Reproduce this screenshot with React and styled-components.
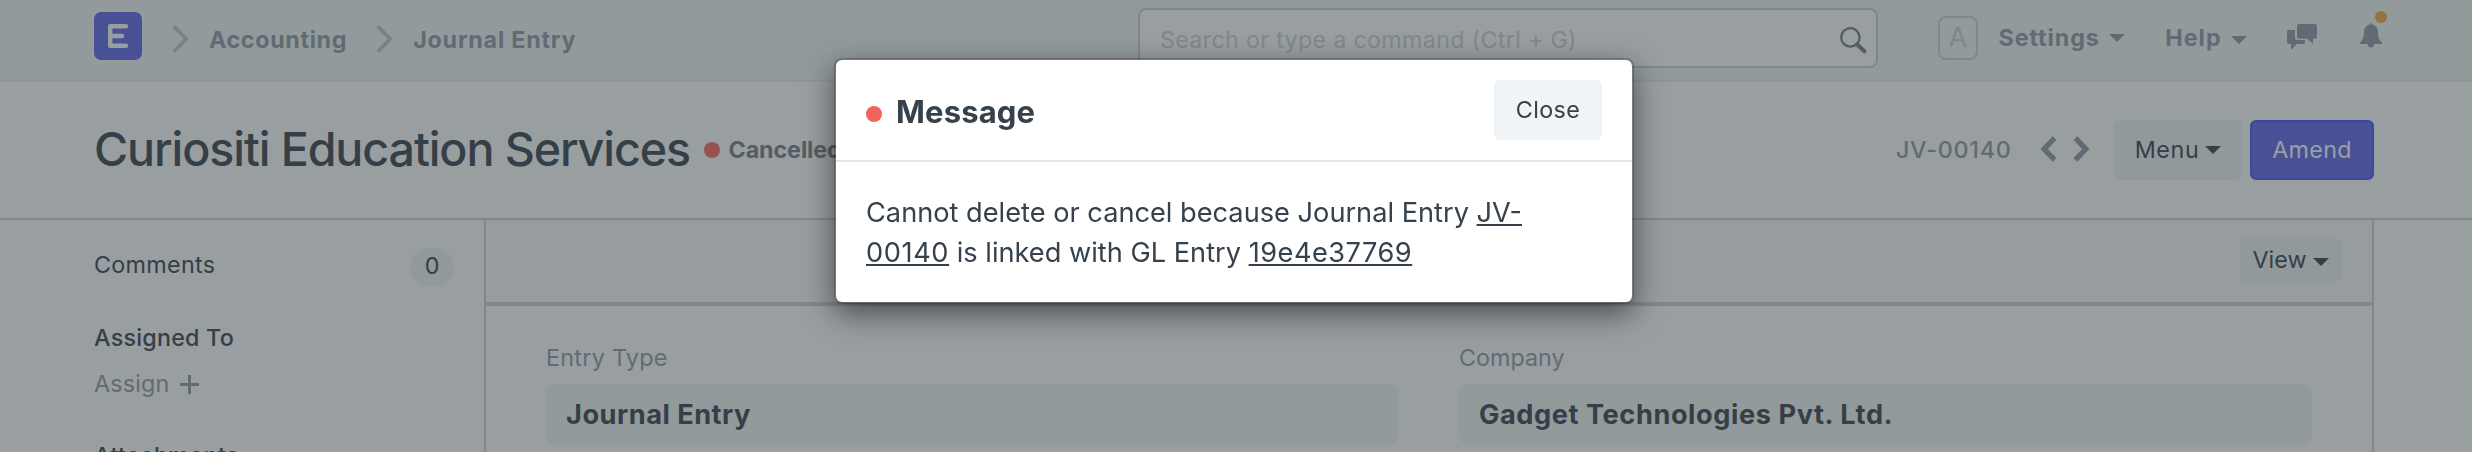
import React from 'react';
import styled, { createGlobalStyle } from 'styled-components';

const muted = 'rgb(141, 153, 164)';
const dark = 'rgb(54, 65, 76)';
const line = 'rgb(207, 211, 214)';
const soft = 'rgb(238, 245, 245)';

const GlobalStyle = createGlobalStyle`
  * { box-sizing: border-box; }
  body { margin: 0; background: #fff; overflow: hidden; }
  button { border: 0; margin: 0; font: inherit; color: inherit; }
  svg { display: block; flex: none; }
`;

const Page = styled.div`
  height: 452px;
  overflow: hidden;
  font-family: Inter, "Liberation Sans", sans-serif;
  font-size: 23.3px;
  line-height: 34px;
  color: ${dark};
  white-space: nowrap;
`;

const Text = styled.span`
  letter-spacing: ${(p) => p.$spacing || 0}px;
  font-weight: ${(p) => p.$weight || 400};
`;

/* Navbar */
const Navbar = styled.header`
  display: flex;
  align-items: flex-start;
  height: 82px;
  padding-left: 94px;
  background: rgb(240, 247, 246);
  border-bottom: 2px solid rgb(234, 237, 241);
  color: ${muted};
`;

const Breadcrumbs = styled.nav`
  display: flex;
  flex: 0 0 1044px;
  padding-top: 12px;
`;

const Logo = styled.div`
  width: 48px;
  height: 48px;
  border-radius: 7px;
  background: rgb(94, 101, 235);
`;

const Separator = styled.div`
  margin: 12px 19px 0 30px;
`;

const Crumb = styled(Text)`
  margin-top: 10.5px;
  margin-right: -1px;
  font-weight: 700;
`;

const SearchBox = styled.div`
  display: flex;
  justify-content: space-between;
  flex: 0 0 740px;
  height: 60px;
  margin-top: 8px;
  padding: 13px 9px 0 20px;
  border: 2px solid ${line};
  border-radius: 8px;
  background: #fff;
  color: rgb(207, 210, 211);
`;

const SearchIconWrap = styled.div`
  margin-top: 4px;
`;

const NavTools = styled.div`
  display: flex;
  padding-left: 60px;
`;

const Avatar = styled.div`
  width: 40px;
  height: 44px;
  margin: 16px 20.5px 0 0;
  border: 2px solid ${line};
  border-radius: 8px;
  font-size: 27.2px;
  line-height: 40px;
  text-align: center;
  color: rgb(205, 208, 210);
`;

const NavMenu = styled.div`
  display: flex;
  gap: 9.5px;
  margin: 20.5px 40px 0 0;
`;

const Caret = styled.span`
  flex: none;
  width: 0;
  height: 0;
  margin-top: ${(p) => p.$top || 0}px;
  border: 8px solid transparent;
  border-top-color: currentColor;
  border-bottom: 0;
`;

const CommentsWrap = styled.div`
  margin: 24px 43px 0 0;
`;

const BellWrap = styled.div`
  position: relative;
  margin-top: 23px;
`;

const BellBadge = styled.span`
  position: absolute;
  left: 15px;
  top: -12px;
  width: 12px;
  height: 12px;
  border-radius: 50%;
  background: rgb(248, 169, 59);
`;

/* Page head */
const PageHead = styled.section`
  display: flex;
  align-items: center;
  justify-content: space-between;
  height: 138px;
  padding: 0 98px 0 94px;
  border-bottom: 2px solid ${line};
`;

const HeadGroup = styled.div`
  display: flex;
  align-items: center;
`;

const Title = styled.h1`
  margin: -2px 14px 0 0;
  font-size: 46.6px;
  line-height: 60px;
  font-weight: 500;
  letter-spacing: -1.09px;
`;

const Dot = styled.span`
  flex: none;
  width: 16px;
  height: 16px;
  border-radius: 50%;
  background: ${(p) => p.$color};
`;

const Status = styled(Text)`
  margin-left: 8.5px;
  color: rgb(118, 125, 135);
`;

const DocName = styled(Text)`
  margin-right: 28.5px;
  color: ${muted};
`;

const Pager = styled.div`
  display: flex;
  gap: 16px;
  margin: -2px 24px 0 0;
  color: ${muted};
`;

const Button = styled.button`
  display: flex;
  align-items: center;
  justify-content: center;
  gap: ${(p) => p.$gap || 0}px;
  width: ${(p) => p.$width}px;
  height: ${(p) => p.$height || 60}px;
  padding: 0 0 1px;
  border-radius: 6px;
  background: ${(p) => p.$bg || soft};
`;

const PrimaryButton = styled(Button)`
  margin-left: 8px;
  border: 2px solid rgb(66, 83, 253);
  background: rgb(94, 101, 235);
  color: #fff;
`;

/* Content */
const Content = styled.div`
  display: flex;
  height: 232px;
  padding: 0 98px 0 94px;
`;

const Sidebar = styled.aside`
  flex: 0 0 390px;
  display: flex;
  flex-direction: column;
  padding: 28px 30px 0 0;
`;

const SidebarRow = styled.div`
  display: flex;
  justify-content: space-between;
  align-items: flex-start;
  margin-bottom: 35px;
`;

const Badge = styled.span`
  width: 44px;
  height: 38px;
  border-radius: 19px;
  background: ${soft};
  line-height: 36px;
  text-align: center;
`;

const SidebarHeading = styled(Text)`
  font-weight: 500;
`;

const AssignLink = styled.div`
  display: flex;
  align-items: center;
  gap: 11px;
  margin: 12px 0 38px;
  color: ${muted};
`;

const Main = styled.main`
  flex: 1;
  border: solid ${line};
  border-width: 0 2px;
`;

const Toolbar = styled.div`
  display: flex;
  justify-content: flex-end;
  height: 86px;
  padding: 18px 30px 0 0;
  border-bottom: 4px solid ${line};
  background: rgb(250, 251, 251);
`;

const Form = styled.div`
  display: grid;
  grid-template-columns: 1fr 1fr;
  gap: 60px;
  padding: 35px 60px 0;
`;

const Field = styled.div`
  display: flex;
  flex-direction: column;
  gap: 9px;
`;

const Label = styled(Text)`
  color: ${muted};
`;

const Value = styled.div`
  height: 60px;
  padding: 1px 0 0 20px;
  border-radius: 8px;
  background: rgb(240, 247, 246);
  font-size: 27.2px;
  line-height: 60px;
  font-weight: 700;
  letter-spacing: ${(p) => p.$spacing}px;
`;

/* Dialog */
const Backdrop = styled.div`
  position: fixed;
  inset: 0;
  background: rgba(52, 61, 65, 0.5);
`;

const DialogLayer = styled.div`
  position: fixed;
  inset: 0;
  padding: 58px 0 0 834px;
`;

const Dialog = styled.div`
  width: 800px;
  height: 246px;
  border: 2px solid rgba(0, 0, 0, 0.2);
  border-radius: 8px;
  background: #fff;
  background-clip: padding-box;
  box-shadow: 0 10px 30px rgba(0, 0, 0, 0.5);
  color: #36414c;
`;

const DialogHeader = styled.div`
  display: flex;
  align-items: center;
  height: 102px;
  padding: 0 30px;
  border-bottom: 2px solid #e5e5e5;
`;

const DialogDot = styled(Dot)`
  margin-top: 8px;
`;

const DialogTitle = styled.h2`
  flex: 1;
  margin: 4px 0 0 14px;
  font-size: 31px;
  line-height: 40px;
  font-weight: 700;
  letter-spacing: 0.15px;
`;

const DialogBody = styled.p`
  margin: 0;
  padding: 31px 30px 0;
  font-size: 27.2px;
  line-height: 40px;
`;

const DocLink = styled.a`
  letter-spacing: ${(p) => p.$spacing || 0}px;
  text-decoration: underline 2px;
  text-underline-offset: 2px;
  text-decoration-skip-ink: none;
`;

const Chevron = () => (
  <svg width="18" height="30" viewBox="0 0 18 30" fill="none" stroke="rgb(190,196,201)" strokeWidth="3.7">
    <path d="M1.8 2.2 14.2 15 1.8 27.6" />
  </svg>
);

const PagerArrow = ({ next }) => (
  <svg width="17" height="28" viewBox="0 0 17 28" fill="none" stroke="currentColor" strokeWidth="5.4">
    <path d={next ? 'M2.4 3.2 12.8 14 2.4 24.8' : 'M14.6 3.2 4.2 14 14.6 24.8'} />
  </svg>
);

export default function App() {
  return (
    <Page>
      <GlobalStyle />
      <Navbar>
        <Breadcrumbs>
          <Logo>
            <svg width="48" height="48" viewBox="0 0 48 48" fill="none" stroke="#fff" strokeWidth="4.4" strokeLinecap="round" strokeLinejoin="round">
              <path d="M32 14.2H16.2V33.8H32M16.2 24H28" />
            </svg>
          </Logo>
          <Separator><Chevron /></Separator>
          <Crumb $spacing={0.65}>Accounting</Crumb>
          <Separator><Chevron /></Separator>
          <Crumb $spacing={0.78}>Journal Entry</Crumb>
        </Breadcrumbs>
        <SearchBox>
          <Text $spacing={0.3}>Search or type a command (Ctrl + G)</Text>
          <SearchIconWrap>
            <svg width="27" height="27" viewBox="0 0 27 27" fill="none" stroke="rgb(114,123,135)">
              <circle cx="10.4" cy="10.4" r="9.2" strokeWidth="2.3" />
              <path d="M17 17.2 24.3 24.3" strokeWidth="4" strokeLinecap="round" />
            </svg>
          </SearchIconWrap>
        </SearchBox>
        <NavTools>
          <Avatar>A</Avatar>
          <NavMenu>
            <Text $weight={700} $spacing={0.91}>Settings</Text>
            <Caret $top={13.5} />
          </NavMenu>
          <NavMenu>
            <Text $weight={700} $spacing={1.03}>Help</Text>
            <Caret $top={15.5} />
          </NavMenu>
          <CommentsWrap>
            <svg width="30" height="26" viewBox="0 0 30 26" fill="currentColor">
              <path d="M12 0H28Q30 0 30 2V12.7Q30 14.7 28 14.7H26V20L20.3 14.7H12Q10 14.7 10 12.7V2Q10 0 12 0Z" />
              <path d="M1.8 6H8V14Q8 16 10 16H18V18.2Q18 20 16.2 20H9.7L4 26V20H1.8Q0 20 0 18.2V7.8Q0 6 1.8 6Z" />
            </svg>
          </CommentsWrap>
          <BellWrap>
            <svg width="22" height="25" viewBox="0 0 22 25" fill="currentColor">
              <path d="M11 0Q12 0 12 1.4C16 2 18 5.4 18 9.5C18 15 19.5 17.3 22 19.5V21H14.2Q13.8 24.6 11 24.6Q8.2 24.6 7.8 21H0V19.5C2.5 17.3 4 15 4 9.5C4 5.4 6 2 10 1.4Q10 0 11 0Z" />
            </svg>
            <BellBadge />
          </BellWrap>
        </NavTools>
      </Navbar>

      <PageHead>
        <HeadGroup>
          <Title>Curiositi Education Services</Title>
          <Dot $color="rgb(248,105,95)" />
          <Status $weight={700} $spacing={-0.1}>Cancelled</Status>
        </HeadGroup>
        <HeadGroup>
          <DocName $weight={500} $spacing={0.75}>JV-00140</DocName>
          <Pager>
            <PagerArrow />
            <PagerArrow next />
          </Pager>
          <Button $width={128} $gap={6}>
            <Text $spacing={0.6}>Menu</Text>
            <Caret $top={1} />
          </Button>
          <PrimaryButton $width={124}>
            <Text $spacing={0.29}>Amend</Text>
          </PrimaryButton>
        </HeadGroup>
      </PageHead>

      <Content>
        <Sidebar>
          <SidebarRow>
            <Text $spacing={0.31}>Comments</Text>
            <Badge>0</Badge>
          </SidebarRow>
          <SidebarHeading $spacing={0.22}>Assigned To</SidebarHeading>
          <AssignLink>
            <Text $spacing={0.18}>Assign</Text>
            <svg width="19" height="20" viewBox="0 0 19 20" stroke="currentColor" strokeWidth="3">
              <path d="M0 10.5H19M9.5 1V20" />
            </svg>
          </AssignLink>
          <SidebarHeading $spacing={0.39}>Attachments</SidebarHeading>
        </Sidebar>
        <Main>
          <Toolbar>
            <Button $width={102} $height={44} $gap={7}>
              <Text>View</Text>
              <Caret $top={4} />
            </Button>
          </Toolbar>
          <Form>
            <Field>
              <Label $spacing={0.3}>Entry Type</Label>
              <Value $spacing={0.49}>Journal Entry</Value>
            </Field>
            <Field>
              <Label>Company</Label>
              <Value $spacing={0.56}>Gadget Technologies Pvt. Ltd.</Value>
            </Field>
          </Form>
        </Main>
      </Content>

      <Backdrop />
      <DialogLayer>
        <Dialog role="dialog">
          <DialogHeader>
            <DialogDot $color="#f1635d" />
            <DialogTitle>Message</DialogTitle>
            <Button $width={108} $bg="#f0f4f7">
              <Text $spacing={0.39}>Close</Text>
            </Button>
          </DialogHeader>
          <DialogBody>
            Cannot delete or cancel because Journal Entry <DocLink>JV-<br />
            <Text $spacing={0.6}>00140</Text></DocLink> is linked with GL Entry <DocLink $spacing={0.5}>19e4e37769</DocLink>
          </DialogBody>
        </Dialog>
      </DialogLayer>
    </Page>
  );
}
